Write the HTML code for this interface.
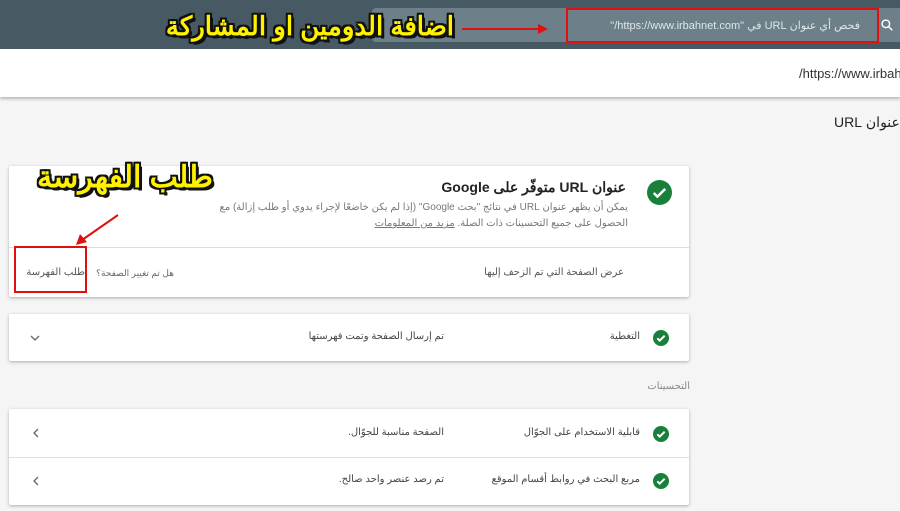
<!DOCTYPE html>
<html><head><meta charset="utf-8"><style>
*{margin:0;padding:0;box-sizing:border-box}
html,body{overflow:hidden}
body{width:900px;height:511px;background:#f5f5f5;font-family:"Liberation Sans","Noto Sans CJK SC",sans-serif;position:relative;color:#333}
.a{position:absolute}
.hdr{left:0;top:0;width:900px;height:49px;background:#475a64}
.search{left:372px;top:8px;width:528px;height:34px;background:#6d8089;border-radius:4px 0 0 4px}
.red{border:2px solid #e01010}
.big{font-weight:bold;color:#fff200;white-space:nowrap;direction:rtl;
text-shadow:-2px -2px 0 #111,2px -2px 0 #111,-2px 2px 0 #111,2px 2px 0 #111,0 2px 0 #111,0 -2px 0 #111,2px 0 0 #111,-2px 0 0 #111,3px 3px 0 #111}
.bar{left:0;top:49px;width:900px;height:48px;background:#fff;box-shadow:0 2px 3px rgba(0,0,0,.25);overflow:hidden}
.card{background:#fff;box-shadow:0 1px 3px rgba(0,0,0,.3);border-radius:2px}
.t{font-size:11px;color:#444;white-space:nowrap;direction:rtl}
.chk{width:16px;height:16px;border-radius:50%;background:#188038}
</style></head><body>
<div class="a hdr"></div>
<div class="a search"></div>
<svg class="a" style="left:880px;top:18px" width="14" height="14" viewBox="0 0 24 24"><circle cx="10" cy="10" r="6.5" fill="none" stroke="#fff" stroke-width="2.5"/><path d="M15 15l6 6" stroke="#fff" stroke-width="2.5"/></svg>
<div class="a red" style="left:566px;top:8px;width:313px;height:35px"></div>
<div class="a t" style="right:40px;top:19px;color:#dfe5e8;font-size:11px">فحص أي عنوان URL في "https://www.irbahnet.com/"</div>
<div class="a big" style="left:166px;top:11px;width:288px;text-align:center;font-size:26px">اضافة الدومين او المشاركة</div>
<svg class="a" style="left:460px;top:22px" width="92" height="14"><path d="M2 7H80" stroke="#e01010" stroke-width="2"/><path d="M78 2l10 5-10 5z" fill="#e01010"/></svg>
<div class="a bar"><div class="a" style="left:799px;top:17px;font-size:13px;color:#333;white-space:nowrap">/https://www.irbahnet.com</div></div>
<div class="a" style="left:0;top:100px;width:900px;height:40px;overflow:hidden"><div class="a t" style="left:834px;top:14px;font-size:14px;color:#222">عنوان URL</div></div>

<div class="a card" style="left:9px;top:166px;width:680px;height:131px"></div>
<div class="a" style="left:9px;top:247px;width:680px;height:1px;background:#ddd"></div>
<div class="a chk" style="left:647px;top:180px;width:25px;height:25px"></div>
<svg class="a" style="left:647px;top:180px" width="25" height="25" viewBox="0 0 24 24"><path d="M6.5 12.5l3.5 3.5 7.5-7.5" fill="none" stroke="#fff" stroke-width="2.4"/></svg>
<div class="a t" style="right:274px;top:179px;font-size:14px;color:#222;font-weight:bold">عنوان URL متوفّر على Google</div>
<div class="a t" style="right:272px;top:202px;font-size:10px;color:#777">يمكن أن يظهر عنوان URL في نتائج "بحث Google" (إذا لم يكن خاضعًا لإجراء يدوي أو طلب إزالة) مع</div>
<div class="a t" style="right:272px;top:218px;font-size:10px;color:#777">الحصول على جميع التحسينات ذات الصلة. <u>مزيد من المعلومات</u></div>
<div class="a t" style="right:276px;top:267px;font-size:10px;color:#555">عرض الصفحة التي تم الزحف إليها</div>
<div class="a t" style="right:726px;top:268px;font-size:9px;color:#666">هل تم تغيير الصفحة؟</div>
<div class="a t" style="right:815px;top:267px;font-size:10px;color:#555">طلب الفهرسة</div>
<div class="a red" style="left:14px;top:246px;width:73px;height:47px"></div>
<div class="a big" style="left:34px;top:160px;width:182px;text-align:center;font-size:30px">طلب الفهرسة</div>
<svg class="a" style="left:72px;top:212px" width="50" height="36"><path d="M46 3L10 28" stroke="#e01010" stroke-width="2"/><path d="M4 33l4-11 7 8z" fill="#e01010"/></svg>

<div class="a card" style="left:9px;top:314px;width:680px;height:47px"></div>
<div class="a chk" style="left:653px;top:330px"></div>
<svg class="a" style="left:653px;top:330px" width="16" height="16" viewBox="0 0 24 24"><path d="M6.5 12.5l3.5 3.5 7.5-7.5" fill="none" stroke="#fff" stroke-width="3"/></svg>
<div class="a t" style="right:260px;top:331px;font-size:10px">التغطية</div>
<div class="a t" style="right:456px;top:331px;font-size:10px">تم إرسال الصفحة وتمت فهرستها</div>
<svg class="a" style="left:30px;top:334px" width="10" height="8"><path d="M1 2l4 4 4-4" fill="none" stroke="#666" stroke-width="1.3"/></svg>

<div class="a t" style="right:210px;top:381px;font-size:10px;color:#888">التحسينات</div>

<div class="a card" style="left:9px;top:409px;width:680px;height:96px"></div>
<div class="a" style="left:9px;top:457px;width:680px;height:1px;background:#e0e0e0"></div>
<div class="a chk" style="left:653px;top:426px"></div>
<svg class="a" style="left:653px;top:426px" width="16" height="16" viewBox="0 0 24 24"><path d="M6.5 12.5l3.5 3.5 7.5-7.5" fill="none" stroke="#fff" stroke-width="3"/></svg>
<div class="a chk" style="left:653px;top:473px"></div>
<svg class="a" style="left:653px;top:473px" width="16" height="16" viewBox="0 0 24 24"><path d="M6.5 12.5l3.5 3.5 7.5-7.5" fill="none" stroke="#fff" stroke-width="3"/></svg>
<div class="a t" style="right:260px;top:427px;font-size:10px">قابلية الاستخدام على الجوّال</div>
<div class="a t" style="right:456px;top:427px;font-size:10px">الصفحة مناسبة للجوّال.</div>
<div class="a t" style="right:260px;top:474px;font-size:10px">مربع البحث في روابط أقسام الموقع</div>
<div class="a t" style="right:456px;top:474px;font-size:10px">تم رصد عنصر واحد صالح.</div>
<svg class="a" style="left:32px;top:428px" width="8" height="10"><path d="M6 1L2 5l4 4" fill="none" stroke="#666" stroke-width="1.3"/></svg>
<svg class="a" style="left:32px;top:476px" width="8" height="10"><path d="M6 1L2 5l4 4" fill="none" stroke="#666" stroke-width="1.3"/></svg>
</body></html>
